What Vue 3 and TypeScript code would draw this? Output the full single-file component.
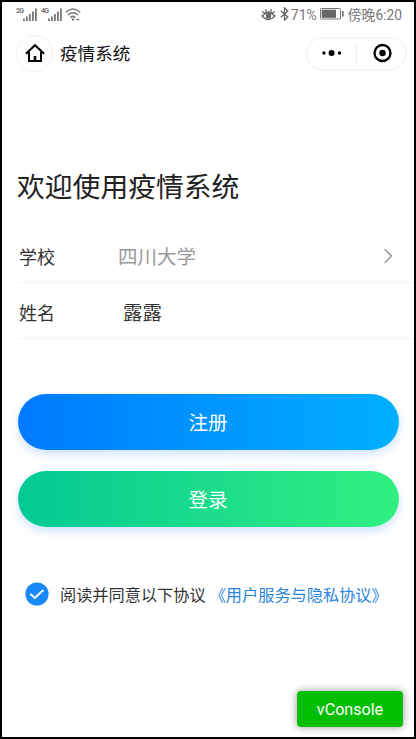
<script setup lang="ts">
import { ref } from 'vue'

interface Field {
  label: string
  value: string
  picker: boolean
}

const fields: Field[] = [
  { label: '学校', value: '四川大学', picker: true },
  { label: '姓名', value: '露露', picker: false },
]
const networks: string[] = ['2G', '4G']
const agreed = ref(true)
</script>

<template>
  <div class="screen">
    <header class="status">
      <div v-for="n in networks" :key="n" class="signal">
        <span class="gen">{{ n }}</span>
        <svg width="14" height="13" viewBox="0 0 14 13" fill="#777">
          <path d="M0 10.500h1.800V13H0zM3 8.500h1.800V13H3zM6 6h1.800v7H6zM9 3.500h1.800V13H9zM12 .5h1.800V13H12z" />
        </svg>
      </div>
      <svg class="wifi" width="16" height="13" viewBox="0 0 16 13" fill="none" stroke="#777" stroke-width="1.500">
        <path d="M.8 4.300Q8-2.300 15.200 4.300M3 7Q8 2.600 13 7M5.300 9.500Q8 7.300 10.500 9.500" />
        <circle cx="8" cy="11.500" r="1.200" fill="#777" stroke="none" />
        <path d="M11.300 11.500h3" stroke-width="1.500" />
      </svg>
      <div class="right">
        <svg class="eye" width="15" height="13" viewBox="0 0 15 13" fill="none" stroke="#666" stroke-width="1.300">
          <path d="M1 8Q7.500 1.500 14 8Q7.500 15 1 8ZM1.200 3.500L3.500 5.300M4.500 1.300l.9 2.600M10.500 1.300l-.9 2.600M13.800 3.500L11.500 5.300" />
          <path d="M3.500 5.300Q7.500 2.400 11.500 5.300" />
          <circle cx="7.500" cy="8" r="2" fill="#666" />
        </svg>
        <svg class="bt" width="9" height="14" viewBox="0 0 9 14" fill="none" stroke="#666" stroke-width="1.300">
          <path d="M.8 3.800l7 6.300-3.300 3V.9l3.300 3-7 6.300" />
        </svg>
        <span>71%</span>
        <svg class="battery" width="24" height="12" viewBox="0 0 24 12">
          <rect x=".5" y=".5" width="20" height="10.500" rx="1" fill="none" stroke="#777" />
          <rect x="1.700" y="1.700" width="14.300" height="8.100" fill="#666" />
          <rect x="22" y="3" width="1.700" height="5.500" fill="#777" />
        </svg>
        <span class="time">傍晚6:20</span>
      </div>
    </header>

    <nav class="nav">
      <button class="home" aria-label="首页">
        <svg width="20" height="20" viewBox="0 0 20 20" fill="none" stroke="#000" stroke-width="2">
          <path d="M.9 10.800L10 2.200l9.100 8.600M4 9v9h12V9" />
          <path d="M10 18v-5" stroke-width="2.600" />
        </svg>
      </button>
      <span class="name">疫情系统</span>
      <div class="capsule">
        <div class="half">
          <svg width="20" height="8" viewBox="0 0 20 8">
            <circle cx="1.900" cy="4" r="1.700" />
            <circle cx="9.600" cy="4" r="3" />
            <circle cx="17.500" cy="4" r="1.700" />
          </svg>
        </div>
        <i class="split"></i>
        <div class="half">
          <svg width="20" height="20" viewBox="0 0 20 20">
            <circle cx="10.500" cy="10" r="8" fill="none" stroke="#000" stroke-width="2.300" />
            <circle cx="10.500" cy="10" r="3.200" />
          </svg>
        </div>
      </div>
    </nav>

    <main>
      <h1>欢迎使用疫情系统</h1>
      <div v-for="f in fields" :key="f.label" class="row">
        <span class="label">{{ f.label }}</span>
        <span class="value" :class="{ picker: f.picker }">{{ f.value }}</span>
        <svg v-if="f.picker" class="arrow" width="10" height="16" viewBox="0 0 10 16" fill="none" stroke="#999" stroke-width="1.600">
          <path d="M.7 1.300L7.500 8 .7 14.700" />
        </svg>
      </div>

      <div class="actions">
        <button class="btn register">注册</button>
        <button class="btn login">登录</button>
      </div>

      <div class="agreement">
        <svg class="check" width="24" height="24" viewBox="0 0 24 24" @click="agreed = !agreed">
          <circle cx="12" cy="12" r="11.600" fill="#1989fa" />
          <path v-if="agreed" d="M5.500 12l4.300 4 8.600-8" fill="none" stroke="#fff" stroke-width="2" />
        </svg>
        <span class="terms">阅读并同意以下协议<a>《用户服务与隐私协议》</a></span>
      </div>
    </main>

    <button class="console">vConsole</button>
  </div>
</template>

<style>
body {
  margin: 0;
}
</style>

<style scoped>
.screen {
  position: relative;
  box-sizing: border-box;
  width: 416px;
  height: 739px;
  overflow: hidden;
  border: 2px solid #000;
  background: #fff;
  color: #333;
  font-family: Roboto, 'Noto Sans CJK SC', sans-serif;
}
svg {
  display: block;
  flex: none;
}
button {
  border: 0;
  padding: 0;
  font-family: inherit;
}
.status {
  display: flex;
  align-items: center;
  height: 24px;
  padding: 0 12px 0 14px;
  color: #777;
}
.signal {
  display: flex;
  align-items: flex-start;
  width: 25px;
}
.gen {
  width: 7px;
  font-size: 7px;
  line-height: 7px;
  font-weight: 700;
  letter-spacing: -0.8px;
}
.wifi {
  margin-left: -1px;
}
.right {
  display: flex;
  align-items: center;
  margin-left: auto;
  font-size: 14px;
  line-height: 20px;
  white-space: nowrap;
}
.right span {
  padding-top: 1px;
}
.right .time {
  font-size: 13.8px;
}
.bt {
  margin: 0 2px 0 4px;
}
.battery {
  margin: 0 4px 0 3px;
}
.nav {
  display: flex;
  align-items: center;
  height: 54px;
  padding: 0 7px 0 14px;
}
.home {
  display: flex;
  align-items: center;
  justify-content: center;
  box-sizing: border-box;
  width: 37px;
  height: 37px;
  border: 1px solid #f0f0f0;
  border-radius: 50%;
  background: #fff;
}
.name {
  margin-left: 7px;
  padding-top: 2px;
  color: #111;
  font-size: 17.6px;
  line-height: 26px;
}
.capsule {
  display: flex;
  align-items: center;
  box-sizing: border-box;
  width: 101px;
  height: 33px;
  margin-left: auto;
  border: 1px solid #f0f0f0;
  border-radius: 17px;
}
.half {
  display: flex;
  flex: 1;
  justify-content: center;
}
.split {
  width: 1px;
  height: 20px;
  background: #ebebeb;
}
h1 {
  margin: 88px 0 0 15px;
  color: #222;
  font-size: 27.8px;
  line-height: 40px;
  font-weight: 400;
}
.row {
  display: flex;
  align-items: center;
  box-sizing: border-box;
  height: 56px;
  margin-left: 17px;
  padding: 2px 20px 0 0;
  border-bottom: 1px solid #f4f4f4;
}
h1 + .row {
  margin-top: 19px;
}
.label {
  width: 104px;
  font-size: 18px;
}
.value {
  flex: 1;
  font-size: 19.5px;
}
.value.picker {
  margin-left: -5px;
  color: #999;
}
.actions {
  display: flex;
  flex-direction: column;
  gap: 21px;
  padding: 55px 15px 0 16px;
}
.btn {
  height: 56px;
  padding: 0 1px 1px 0;
  border-radius: 28px;
  color: #fff;
  font-size: 19.5px;
  box-shadow: 0 4px 10px rgba(0, 112, 240, 0.2);
}
.register {
  background: linear-gradient(90deg, #007aff, #00b0ff);
}
.login {
  background: linear-gradient(90deg, #04c995, #31f080);
}
.agreement {
  display: flex;
  align-items: center;
  margin-top: 52px;
  padding-left: 23px;
  font-size: 16.2px;
  line-height: 26px;
  white-space: nowrap;
}
.terms {
  padding-top: 4px;
}
.check {
  margin-right: 11px;
}
.agreement a {
  margin-left: 4px;
  color: #2b85d9;
}
.console {
  position: absolute;
  right: 11px;
  bottom: 10px;
  width: 106px;
  height: 36px;
  border-radius: 4px;
  background: #04be02;
  color: #fff;
  font-size: 16.1px;
  box-shadow: 0 0 8px rgba(0, 0, 0, 0.4);
}
</style>
